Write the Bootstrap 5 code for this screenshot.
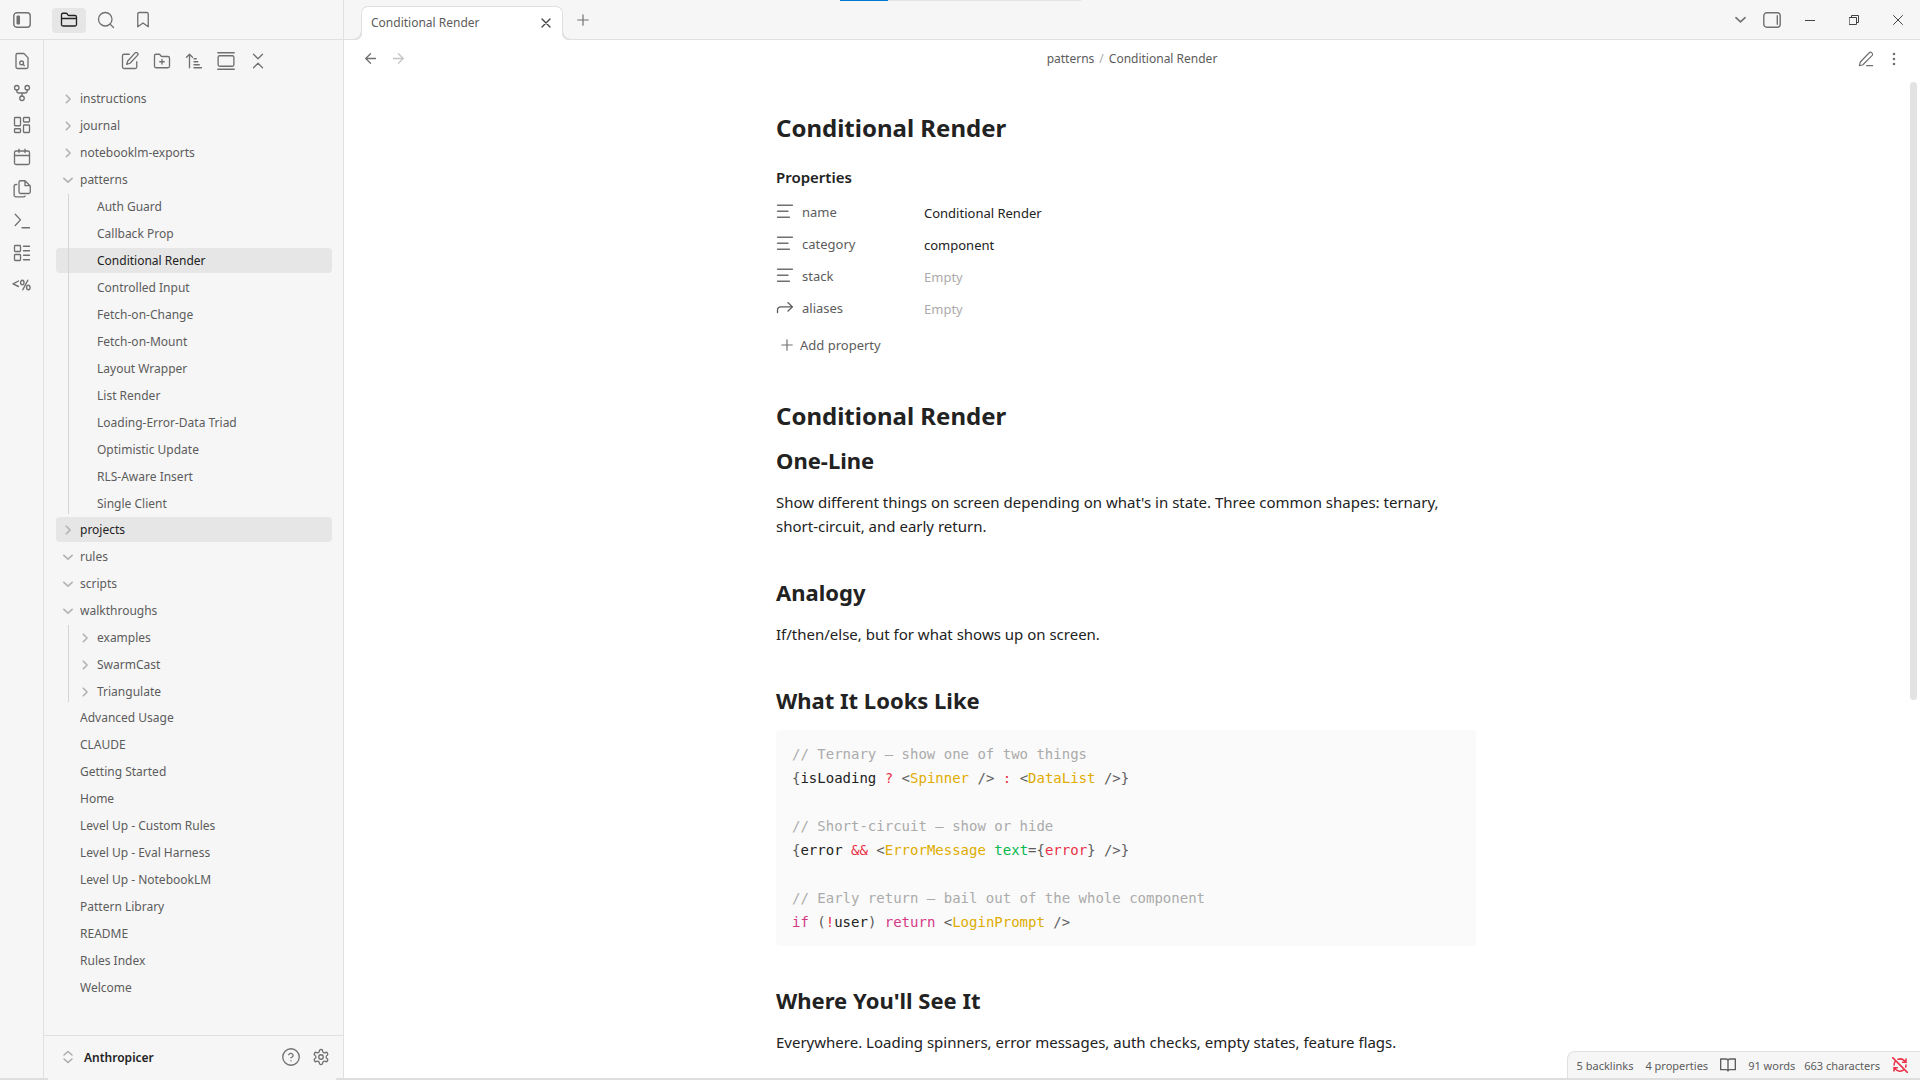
<!DOCTYPE html>
<html lang="en">
<head>
<meta charset="utf-8">
<meta name="viewport" content="width=device-width, initial-scale=1">
<title>Conditional Render</title>
<link href="https://cdn.jsdelivr.net/npm/bootstrap@5.3.0/dist/css/bootstrap.min.css" rel="stylesheet">
<style>
  :root { --pane: #f6f6f6; --line: #e0e0e0; --ink: #222; --soft: #5c5c5c; --faint: #ababab; --hover: #e6e6e6; }
  body { font-family: "Noto Sans", "Open Sans", sans-serif; font-size: 12px; line-height: 17px; color: var(--soft); background: #fff; }
  svg { fill: none; stroke: currentColor; stroke-width: 1.75; stroke-linecap: round; stroke-linejoin: round; flex: none; }
  a { color: inherit; text-decoration: none; }
  .i18 { width: 18px; height: 18px; }
  .i16 { width: 16px; height: 16px; }
  .w1 { stroke-width: 1; stroke-linejoin: miter; }
  .w13 { stroke-width: 1.4; }
  .w2 { stroke-width: 2; }
  .w35 { stroke-width: 3.5; }
  .gray { stroke: #707070; }
  .off { stroke: #e93147; stroke-width: 2.3; }
  .tool { display: flex; align-items: center; justify-content: center; border: 0; padding: 0; background: none; color: #707070; width: 32px; height: 32px; border-radius: 4px; flex: none; }
  .tool-tab { width: 34px; height: 25px; }
  .tool-tab.active { background: var(--hover); color: var(--ink); }
  .tool-close { width: 20px; color: #444; }
  .tool-dim { color: #c4c4c4; }
  .titlebar { height: 40px; background: var(--pane); border-bottom: 1px solid var(--line); }
  .title-left { width: 344px; border-right: 1px solid var(--line); margin-bottom: -1px; padding-left: 6px; }
  .title-tabs { gap: 3px; margin-left: 14px; }
  .filetab { position: relative; width: 202px; height: 34px; margin: 6px 0 -1px 17px; padding: 0 6px 2px 9px; background: #fff; border: 1px solid var(--line); border-bottom: 0; border-radius: 7px 7px 0 0; }
  .filetab::before, .filetab::after { content: ""; position: absolute; bottom: 0; width: 8px; height: 8px; }
  .filetab::before { left: -8px; background: radial-gradient(circle at 0 0, var(--pane) 6px, var(--line) 7px, var(--line) 8px, #fff 9px); }
  .filetab::after { right: -8px; background: radial-gradient(circle at 100% 0, var(--pane) 6px, var(--line) 7px, var(--line) 8px, #fff 9px); }
  .win { color: #444; width: 44px; }
  .loadbar { position: absolute; top: 0; left: 840px; width: 241px; height: 1px; background: #e3e3e3; border-radius: 0; }
  .loadbar .progress-bar { width: 20%; background: #0078d4; }
  .ribbon { width: 44px; background: var(--pane); border-right: 1px solid var(--line); padding-top: 5px; }
  .explorer { width: 300px; background: var(--pane); border-right: 1px solid var(--line); }
  .explorer-tools { height: 46px; padding: 5px 12px 0; }
  .tree { padding: 0 11px 0 12px; overflow: hidden; }
  .tree ul { list-style: none; padding: 0; margin: 0; }
  .item { display: flex; align-items: center; width: 100%; height: 25px; margin-bottom: 2px; padding: 0 8px 0 24px; border: 0; border-radius: 4px; background: none; color: var(--soft); text-align: left; }
  .item svg { width: 10px; height: 10px; margin: 0 7px 0 -17px; stroke-width: 4; color: #b3b3b3; }
  .item.on { background: var(--hover); color: var(--ink); }
  .tree .kids { position: relative; margin-bottom: -1px; }
  .kids::before { content: ""; position: absolute; left: 12px; top: 0; bottom: 2px; width: 1px; background: #d4d4d4; }
  .kids .item { padding-left: 41px; }
  .vault { height: 43px; border-top: 1px solid var(--line); padding: 0 7px 0 18px; color: var(--ink); gap: 10px; }
  .vault svg.updown { stroke: #ababab; stroke-width: 1.5; }
  .vault .tool { width: 30px; }
  .viewhead { height: 40px; padding: 0 12px 3px 12px; }
  .viewhead .tool { width: 28px; }
  .viewhead .flank { flex: 1 1 0; }
  .crumbs { gap: 5px; }
  .page { width: 700px; max-width: 100%; padding-top: 32px; color: var(--ink); font-size: 15px; line-height: 24px; }
  .page h1, .page h2, .doc-title { font-weight: 700; line-height: 32px; color: var(--ink); margin: 0; }
  .page h1, .doc-title { font-size: 24px; }
  .page h2 { font-size: 22px; margin: 38px 0 14px; }
  .page h1 + h2 { margin-top: 12px; }
  .page p { margin: 0; }
  .props-title { font-size: 15px; font-weight: 600; margin: 21px 0 7px; line-height: 24px; }
  .prop { height: 32px; font-size: 13px; color: var(--soft); }
  .prop label { width: 122px; }
  .prop input { border: 0; padding: 2px 0 0; background: none; color: var(--ink); font-size: 13px; outline: 0; }
  .prop input::placeholder { color: var(--faint); opacity: 1; }
  .addprop { border: 0; background: none; padding: 0 4px; height: 32px; margin: 5px 0 39px; color: var(--soft); font-size: 13px; gap: 6px; }
  .codebox { background: #fafafa; border-radius: 4px; padding: 12px 16px; margin: 0; font: 14px/24px "DejaVu Sans Mono", monospace; color: var(--soft); overflow: hidden; }
  .codebox code { font: inherit; color: inherit; }
  .c { color: var(--faint); } .v { color: var(--ink); } .o { color: #e93147; } .t { color: #e0ac00; } .k { color: #d53984; } .g { color: #08b94e; }
  .rail { width: 12px; padding: 2px 3px 0 2px; }
  .thumb { height: 62%; background: #e3e3e3; border-radius: 4px; }
  .status { position: absolute; right: 0; bottom: 0; height: 27px; background: var(--pane); border: 1px solid var(--line); border-width: 1px 0 0 1px; border-radius: 8px 0 0 0; padding: 0 12px 0 9px; font-size: 11px; gap: 12px; }
  .counts { gap: 9px; }
  .shelf { height: 2px; background: #dedede; }
  .shelf div { width: 15%; margin-left: 48px; background: #f6f6f6; }
</style>
</head>
<body class="vh-100 overflow-hidden d-flex flex-column">
<svg width="0" height="0" class="position-absolute">
  <symbol id="right" viewBox="0 0 24 24"><path d="m8 3 9 9-9 9"/></symbol>
  <symbol id="down" viewBox="0 0 24 24"><path d="m2 8 10 9 10-9"/></symbol>
  <symbol id="text" viewBox="0 0 24 24"><path d="M22 3H2M16 11H2M18 19H2"/></symbol>
  <symbol id="plus" viewBox="0 0 24 24"><path d="M3 12h18M12 3v18"/></symbol>
  <symbol id="cross" viewBox="0 0 24 24"><path d="M18 6 6 18M6 6l12 12"/></symbol>
</svg>

<header class="titlebar d-flex position-relative flex-shrink-0">
  <div class="title-left d-flex align-items-center flex-shrink-0">
    <button class="tool" aria-label="Collapse sidebar"><svg class="w13" width="18" height="16" viewBox="0 0 18 16"><rect x=".8" y=".8" width="16.4" height="14.4" rx="3"/><rect x="3.5" y="3.5" width="3.5" height="9" rx="1" fill="currentColor" stroke="none"/></svg></button>
    <div class="title-tabs d-flex">
      <button class="tool tool-tab active" aria-label="Files"><svg class="i18" viewBox="0 0 24 24"><path d="M20 20a2 2 0 0 0 2-2V8a2 2 0 0 0-2-2h-7.900a2 2 0 0 1-1.690-.900L9.600 3.900A2 2 0 0 0 7.930 3H4a2 2 0 0 0-2 2v13a2 2 0 0 0 2 2ZM2 10h20"/></svg></button>
      <button class="tool tool-tab" aria-label="Search"><svg class="i18" viewBox="0 0 24 24"><circle cx="11" cy="11" r="9"/><path d="m22 22-4.500-4.500"/></svg></button>
      <button class="tool tool-tab" aria-label="Bookmarks"><svg class="i18" viewBox="0 0 24 24"><path d="m19 21-7-5-7 5V4a2 2 0 0 1 2-2h10a2 2 0 0 1 2 2z"/></svg></button>
    </div>
  </div>
  <div class="filetab d-flex align-items-center justify-content-between flex-shrink-0">
    <span>Conditional Render</span>
    <button class="tool tool-close" aria-label="Close tab"><svg class="i16 w2"><use href="#cross"/></svg></button>
  </div>
  <button class="tool mt-1 ms-1 me-auto" aria-label="New tab"><svg class="w2" width="14" height="14"><use href="#plus"/></svg></button>
  <div class="d-flex align-items-center">
    <button class="tool" aria-label="Tab list"><svg class="w35" width="11" height="11"><use href="#down"/></svg></button>
    <button class="tool" aria-label="Expand sidebar"><svg class="w13" width="18" height="16" viewBox="0 0 18 16"><rect x=".8" y=".8" width="16.4" height="14.4" rx="3"/><path d="M14.300 3.800v8.400"/></svg></button>
    <button class="tool win" aria-label="Minimize"><svg class="w1" width="10" height="10"><path d="M0 5.500h10"/></svg></button>
    <button class="tool win" aria-label="Restore"><svg class="w1" width="10" height="10"><path d="M.5 2.500h7v7h-7zM2.500 2.500v-2h7v7h-2"/></svg></button>
    <button class="tool win" aria-label="Close"><svg class="w1" width="10" height="10"><path d="m.5.5 9 9M9.500.5l-9 9"/></svg></button>
  </div>
  <div class="loadbar progress"><div class="progress-bar"></div></div>
</header>

<div class="d-flex flex-grow-1 overflow-hidden">
  <nav class="ribbon d-flex flex-column align-items-center flex-shrink-0" aria-label="Ribbon">
    <button class="tool" aria-label="Quick switcher"><svg class="i18" viewBox="0 0 24 24"><path d="M14.500 2H6a2 2 0 0 0-2 2v16a2 2 0 0 0 2 2h12a2 2 0 0 0 2-2V7.500L14.500 2z"/><circle cx="11.500" cy="14.500" r="2.500"/><path d="M13.250 16.250 15 18"/></svg></button>
    <button class="tool" aria-label="Graph view"><svg class="i18" viewBox="0 0 24 24"><circle cx="12" cy="19" r="3"/><circle cx="5" cy="5" r="3"/><circle cx="19" cy="5" r="3"/><path d="M5 8v1a3 3 0 0 0 3 3h8a3 3 0 0 0 3-3V8M12 12v4"/></svg></button>
    <button class="tool" aria-label="New canvas"><svg class="i18" viewBox="0 0 24 24"><rect x="2" y="2" width="8" height="11" rx="1"/><rect x="14" y="2" width="8" height="6" rx="1"/><rect x="14" y="12" width="8" height="10" rx="1"/><rect x="2" y="17" width="8" height="5" rx="1"/></svg></button>
    <button class="tool" aria-label="Daily note"><svg class="i18" viewBox="0 0 24 24"><rect x="2" y="4" width="20" height="18" rx="2"/><path d="M16 1.500V6M8 1.500V6M2 10h20"/></svg></button>
    <button class="tool" aria-label="Insert template"><svg class="i18" viewBox="0 0 24 24"><path d="M15.500 1H10a2 2 0 0 0-2 2v13a2 2 0 0 0 2 2h11a2 2 0 0 0 2-2V8L16 1v6.500h6.500M5 6H4a2.500 2.500 0 0 0-2.500 2.500v11A2.500 2.500 0 0 0 4 22.500h10a2 2 0 0 0 2-1"/></svg></button>
    <button class="tool" aria-label="Command palette"><svg class="i18" viewBox="0 0 24 24"><path d="m3 18 7-7.500L3 3M12 21h10"/></svg></button>
    <button class="tool" aria-label="Bases"><svg class="i18" viewBox="0 0 24 24"><rect x="2" y="2" width="8" height="8" rx="1"/><rect x="2" y="14" width="8" height="8" rx="1"/><path d="M14 3h8M14 9h8M14 15h8M14 21h8"/></svg></button>
    <button class="tool" aria-label="Templater"><svg class="w13" width="19" height="12" viewBox="0 0 19 12"><path d="M6.500 2 1 4.800l5.500 2.700M15.800 1.200l-5 9.600"/><ellipse cx="10.300" cy="3.600" rx="1.700" ry="2.300"/><ellipse cx="16.300" cy="8.400" rx="1.700" ry="2.300"/></svg></button>
  </nav>

  <aside class="explorer d-flex flex-column flex-shrink-0">
    <div class="explorer-tools d-flex justify-content-center align-items-start">
      <button class="tool" aria-label="New note"><svg class="i18" viewBox="0 0 24 24"><path d="M11 3H4a2 2 0 0 0-2 2v15a2 2 0 0 0 2 2h15a2 2 0 0 0 2-2v-7"/><path d="M18.500 1.500a2.100 2.100 0 0 1 3.500 3L12 15l-4.500 1.500L9 12z"/></svg></button>
      <button class="tool" aria-label="New folder"><svg class="i18" viewBox="0 0 24 24"><path d="M12 10v6M9 13h6M20 21a2 2 0 0 0 2-2V8a2 2 0 0 0-2-2h-7.900a2 2 0 0 1-1.690-.900L9.600 3.900A2 2 0 0 0 7.930 3H4a2 2 0 0 0-2 2v14a2 2 0 0 0 2 2Z"/></svg></button>
      <button class="tool" aria-label="Sort order"><svg class="i18" viewBox="0 0 24 24"><path d="m2 7 4-4 4 4M6 3v18M12 9h3M12 13h5M12 17h7M12 21h10"/></svg></button>
      <button class="tool" aria-label="Auto-reveal"><svg class="i18" viewBox="0 0 24 24"><path d="M1 1h22M1 23h22"/><rect x="1.500" y="5" width="21" height="14" rx="2"/></svg></button>
      <button class="tool" aria-label="Collapse all"><svg class="i18" viewBox="0 0 24 24"><path d="m6 21 6-6 6 6M6 3l6 6 6-6"/></svg></button>
    </div>
    <div class="tree flex-grow-1">
      <ul>
        <li><button class="item"><svg><use href="#right"/></svg>instructions</button></li>
        <li><button class="item"><svg><use href="#right"/></svg>journal</button></li>
        <li><button class="item"><svg><use href="#right"/></svg>notebooklm-exports</button></li>
        <li><button class="item"><svg><use href="#down"/></svg>patterns</button>
          <ul class="kids">
            <li><a class="item" href="#">Auth Guard</a></li>
            <li><a class="item" href="#">Callback Prop</a></li>
            <li><a class="item on" href="#">Conditional Render</a></li>
            <li><a class="item" href="#">Controlled Input</a></li>
            <li><a class="item" href="#">Fetch-on-Change</a></li>
            <li><a class="item" href="#">Fetch-on-Mount</a></li>
            <li><a class="item" href="#">Layout Wrapper</a></li>
            <li><a class="item" href="#">List Render</a></li>
            <li><a class="item" href="#">Loading-Error-Data Triad</a></li>
            <li><a class="item" href="#">Optimistic Update</a></li>
            <li><a class="item" href="#">RLS-Aware Insert</a></li>
            <li><a class="item" href="#">Single Client</a></li>
          </ul></li>
        <li><button class="item on"><svg><use href="#right"/></svg>projects</button></li>
        <li><button class="item"><svg><use href="#down"/></svg>rules</button></li>
        <li><button class="item"><svg><use href="#down"/></svg>scripts</button></li>
        <li><button class="item"><svg><use href="#down"/></svg>walkthroughs</button>
          <ul class="kids">
            <li><button class="item"><svg><use href="#right"/></svg>examples</button></li>
            <li><button class="item"><svg><use href="#right"/></svg>SwarmCast</button></li>
            <li><button class="item"><svg><use href="#right"/></svg>Triangulate</button></li>
          </ul></li>
        <li><a class="item" href="#">Advanced Usage</a></li>
        <li><a class="item" href="#">CLAUDE</a></li>
        <li><a class="item" href="#">Getting Started</a></li>
        <li><a class="item" href="#">Home</a></li>
        <li><a class="item" href="#">Level Up - Custom Rules</a></li>
        <li><a class="item" href="#">Level Up - Eval Harness</a></li>
        <li><a class="item" href="#">Level Up - NotebookLM</a></li>
        <li><a class="item" href="#">Pattern Library</a></li>
        <li><a class="item" href="#">README</a></li>
        <li><a class="item" href="#">Rules Index</a></li>
        <li><a class="item" href="#">Welcome</a></li>
      </ul>
    </div>
    <div class="vault d-flex align-items-center flex-shrink-0">
      <svg class="updown" width="12" height="14" viewBox="0 0 12 14"><path d="m2 5 4-3.500L10 5M2 9l4 3.500L10 9"/></svg>
      <span class="fw-semibold me-auto">Anthropicer</span>
      <div class="d-flex">
        <button class="tool" aria-label="Help"><svg class="i18" viewBox="0 0 24 24"><circle cx="12" cy="12" r="11"/><path d="M9 9a3 3 0 0 1 5.800 1c0 2-3 3-3 3M12 17h.01"/></svg></button>
        <button class="tool" aria-label="Settings"><svg class="i18" viewBox="0 0 24 24"><path d="M12.220 2h-.440a2 2 0 0 0-2 2v.180a2 2 0 0 1-1 1.730l-.430.250a2 2 0 0 1-2 0l-.150-.080a2 2 0 0 0-2.730.730l-.220.380a2 2 0 0 0 .730 2.730l.150.100a2 2 0 0 1 1 1.720v.510a2 2 0 0 1-1 1.740l-.150.090a2 2 0 0 0-.730 2.730l.220.380a2 2 0 0 0 2.730.730l.150-.080a2 2 0 0 1 2 0l.430.250a2 2 0 0 1 1 1.730V20a2 2 0 0 0 2 2h.440a2 2 0 0 0 2-2v-.180a2 2 0 0 1 1-1.730l.430-.250a2 2 0 0 1 2 0l.150.080a2 2 0 0 0 2.730-.730l.220-.390a2 2 0 0 0-.730-2.730l-.150-.080a2 2 0 0 1-1-1.740v-.500a2 2 0 0 1 1-1.740l.150-.090a2 2 0 0 0 .730-2.730l-.220-.380a2 2 0 0 0-2.730-.730l-.150.080a2 2 0 0 1-2 0l-.430-.250a2 2 0 0 1-1-1.730V4a2 2 0 0 0-2-2z"/><circle cx="12" cy="12" r="3"/></svg></button>
      </div>
    </div>
  </aside>

  <main class="d-flex flex-column flex-grow-1 overflow-hidden position-relative">
    <div class="viewhead d-flex align-items-center flex-shrink-0">
      <div class="flank d-flex">
        <button class="tool" aria-label="Back"><svg class="w13" width="11" height="11" viewBox="0 0 12 12"><path d="M11.500 6H.8M6 .8.8 6 6 11.200"/></svg></button>
        <button class="tool tool-dim" aria-label="Forward"><svg class="w13" width="11" height="11" viewBox="0 0 12 12"><path d="M.5 6h10.700M6 .8 11.200 6 6 11.200"/></svg></button>
      </div>
      <div class="crumbs d-flex"><a href="#">patterns</a><span class="c">/</span><span>Conditional Render</span></div>
      <div class="flank d-flex justify-content-end">
        <button class="tool" aria-label="Edit"><svg class="i16" viewBox="0 0 24 24"><path d="M13 22h9M16.500 3a2.800 2.800 0 0 1 4.500 4L7 21l-5 1 1.500-5.500z"/></svg></button>
        <button class="tool" aria-label="More options"><svg width="4" height="14" viewBox="0 0 4 14"><path class="w35" d="M2 2h.01M2 7h.01M2 12h.01" style="stroke-width:2.600"/></svg></button>
      </div>
    </div>
    <div class="d-flex flex-grow-1 overflow-hidden">
      <div class="flex-grow-1 d-flex justify-content-center align-items-start overflow-hidden">
        <article class="page">
          <div class="doc-title">Conditional Render</div>
          <div class="props-title">Properties</div>
          <div class="prop d-flex align-items-center"><svg class="i18 gray"><use href="#text"/></svg><label class="ms-2" for="p-name">name</label><input class="flex-fill" id="p-name" value="Conditional Render"></div>
          <div class="prop d-flex align-items-center"><svg class="i18 gray"><use href="#text"/></svg><label class="ms-2" for="p-cat">category</label><input class="flex-fill" id="p-cat" value="component"></div>
          <div class="prop d-flex align-items-center"><svg class="i18 gray"><use href="#text"/></svg><label class="ms-2" for="p-stack">stack</label><input class="flex-fill" id="p-stack" placeholder="Empty"></div>
          <div class="prop d-flex align-items-center"><svg class="i18" viewBox="0 0 24 24"><path d="m16 5 6 5.500-6 5.500M2 18v-3.500a4 4 0 0 1 4-4h16"/></svg><label class="ms-2" for="p-alias">aliases</label><input class="flex-fill" id="p-alias" placeholder="Empty"></div>
          <button class="addprop d-flex align-items-center"><svg class="w2 gray" width="14" height="14"><use href="#plus"/></svg>Add property</button>

          <h1>Conditional Render</h1>
          <h2>One-Line</h2>
          <p>Show different things on screen depending on what's in state. Three common shapes: ternary, short-circuit, and early return.</p>
          <h2>Analogy</h2>
          <p>If/then/else, but for what shows up on screen.</p>
          <h2>What It Looks Like</h2>
<pre class="codebox"><code><span class="c">// Ternary — show one of two things</span>
{<span class="v">isLoading</span> <span class="o">?</span> &lt;<span class="t">Spinner</span> /&gt; <span class="o">:</span> &lt;<span class="t">DataList</span> /&gt;}

<span class="c">// Short-circuit — show or hide</span>
{<span class="v">error</span> <span class="o">&amp;&amp;</span> &lt;<span class="t">ErrorMessage</span> <span class="g">text</span>={<span class="o">error</span>} /&gt;}

<span class="c">// Early return — bail out of the whole component</span>
<span class="k">if</span> (<span class="o">!</span><span class="v">user</span>) <span class="k">return</span> &lt;<span class="t">LoginPrompt</span> /&gt;</code></pre>
          <h2>Where You'll See It</h2>
          <p>Everywhere. Loading spinners, error messages, auth checks, empty states, feature flags.</p>
        </article>
      </div>
      <div class="rail flex-shrink-0"><div class="thumb"></div></div>
    </div>
    <footer class="status d-flex align-items-center">
      <span>5 backlinks</span><span>4 properties</span>
      <svg class="i16 w2" viewBox="0 0 24 24"><path d="M12 6v15M12 6c0-2-1-3-3-3H1v16h8c2 0 3 1 3 2 0-1 1-2 3-2h8V3h-8c-2 0-3 1-3 3"/></svg>
      <div class="counts d-flex"><span>91 words</span><span>663 characters</span></div>
      <svg class="i16 off" viewBox="0 0 24 24"><path d="M21 8 18.700 5.700A9 9 0 0 0 9 3.500M21 3v5h-5M3 12a9 9 0 0 1 2.600-6.300M21 12c0 1-.2 2-.5 3M3 16l2.300 2.300A9 9 0 0 0 18 19M3 21v-5h5M1 1l22 22"/></svg>
    </footer>
  </main>
</div>
<div class="shelf d-flex flex-shrink-0"><div></div></div>
<script src="https://cdn.jsdelivr.net/npm/bootstrap@5.3.0/dist/js/bootstrap.bundle.min.js"></script>
</body>
</html>
